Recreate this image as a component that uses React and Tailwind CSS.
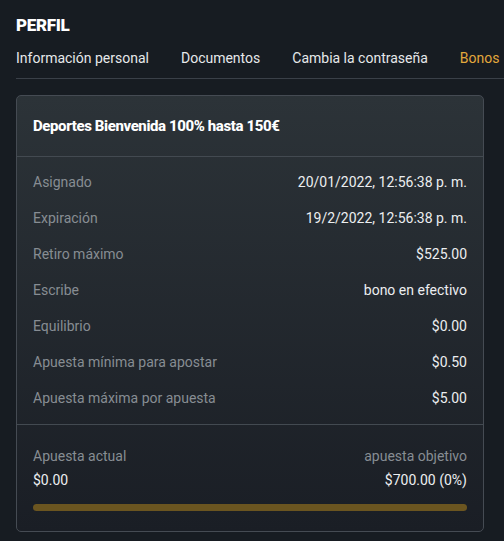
import { useState } from 'react'

const tabs = ['Información personal', 'Documentos', 'Cambia la contraseña', 'Bonos']

const rows = [
  ['Asignado', '20/01/2022, 12:56:38 p. m.'],
  ['Expiración', '19/2/2022, 12:56:38 p. m.'],
  ['Retiro máximo', '$525.00'],
  ['Escribe', 'bono en efectivo'],
  ['Equilibrio', '$0.00'],
  ['Apuesta mínima para apostar', '$0.50'],
  ['Apuesta máxima por apuesta', '$5.00'],
]

export default function App() {
  const [active, setActive] = useState('Bonos')

  return (
    <div className="min-h-[541px] w-[504px] overflow-hidden bg-[#171c22] font-['Roboto',sans-serif] text-[#e4e6e8]">
      <div className="pl-4 pt-[15px]">
        <h1 className="text-[17px] font-black leading-5 tracking-[-0.3px] text-white">PERFIL</h1>

        <nav className="mt-[13px] flex gap-8 whitespace-nowrap border-b border-[#3a4048] pb-[10px] text-[14px] leading-5">
          {tabs.map((t) => (
            <button
              key={t}
              onClick={() => setActive(t)}
              className={t === active ? 'text-[#e3a83c]' : 'text-[#e6e8ea]'}
            >
              {t}
            </button>
          ))}
        </nav>
      </div>

      <div className="mx-4 mt-4 w-[468px] rounded-[5px] border border-[#454b53] bg-gradient-to-b from-[#2c3338] to-[#1a1e25]">
        <div className="flex h-[61px] items-center border-b border-[#434a51] px-4">
          <h2 className="text-[15px] font-extrabold tracking-[-0.4px] text-white">Deportes Bienvenida 100% hasta 150€</h2>
        </div>

        <div className="px-4 pb-[8px] pt-[7px] text-[14px]">
          {rows.map(([label, value]) => (
            <div key={label} className="flex h-9 items-center justify-between">
              <span className="text-[#878d93]">{label}</span>
              <span className="text-[#eceef0]">{value}</span>
            </div>
          ))}
        </div>

        <div className="border-t border-[#434a51] px-4 pb-5 pt-[21px] text-[14px]">
          <div className="flex justify-between leading-5 text-[#878d93]">
            <span>Apuesta actual</span>
            <span>apuesta objetivo</span>
          </div>
          <div className="mt-1 flex justify-between leading-5 text-[#eceef0]">
            <span>$0.00</span>
            <span>$700.00 (0%)</span>
          </div>
          <div className="mt-[14px] h-[7px] rounded-full bg-[#6b5520]">
            <div className="h-full rounded-full bg-[#e3a83c]" style={{ width: '0%' }} />
          </div>
        </div>
      </div>
    </div>
  )
}
